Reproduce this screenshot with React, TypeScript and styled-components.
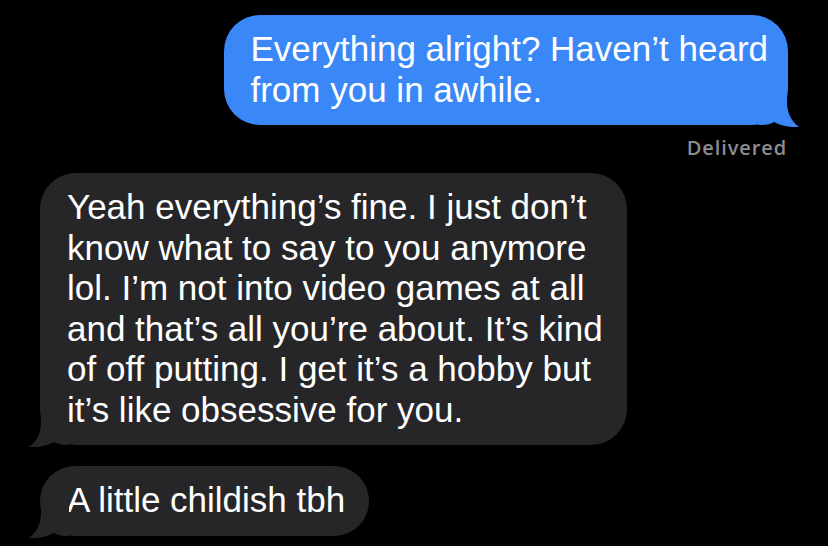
import styled, { createGlobalStyle } from "styled-components";

const GlobalStyle = createGlobalStyle`
    html, body {
        margin: 0;
        padding: 0;
        background: #000;
    }
    body {
        font-family: "Liberation Sans", Arial, sans-serif;
        -webkit-font-smoothing: antialiased;
    }
`;

const Thread = styled.div`
    width: 828px;
    height: 546px;
    box-sizing: border-box;
    padding: 15px 40px 0 40px;
    display: flex;
    flex-direction: column;
    overflow: hidden;
    background: #000;
`;

const Bubble = styled.div<{ $mine?: boolean }>`
    position: relative;
    align-self: ${({ $mine }) => ($mine ? "flex-end" : "flex-start")};
    background: ${({ $mine }) => ($mine ? "#3a87f7" : "#262629")};
    color: #fff;
    border-radius: 36px;
    padding: ${({ $mine }) => ($mine ? "14px 20px 15px 26px" : "14px 24px 15px 27px")};
    font-size: 35px;
    line-height: 40.5px;
    white-space: nowrap;
`;

const Tail = styled.svg<{ $mine?: boolean }>`
    position: absolute;
    bottom: -2px;
    width: 40px;
    height: 40px;
    ${({ $mine }) =>
        $mine ? "right: -11px;" : "left: -11px; transform: scaleX(-1);"}
`;

const Status = styled.div`
    align-self: flex-end;
    margin: 11px 1px 13px 0;
    font-family: "Open Sans", "Liberation Sans", sans-serif;
    font-size: 20px;
    line-height: 24px;
    font-weight: 600;
    letter-spacing: 0.9px;
    color: #8c8c91;
`;

const Gap = styled.div`
    height: 21px;
`;

function BubbleTail({ mine, color }: { mine?: boolean; color: string }) {
    return (
        <Tail $mine={mine} viewBox="0 0 40 40">
            <path
                d="M0 0 H28 V14 C28 26 32 34 40 40 C32 40.5 22 39 15 35 C11 37.5 6 38 0 38 Z"
                fill={color}
            />
        </Tail>
    );
}

function Message({ mine, lines }: { mine?: boolean; lines: string[] }) {
    return (
        <Bubble $mine={mine}>
            {lines.map((l, i) => (
                <div key={i}>{l}</div>
            ))}
            <BubbleTail mine={mine} color={mine ? "#3a87f7" : "#262629"} />
        </Bubble>
    );
}

export default function App() {
    return (
        <>
            <GlobalStyle />
            <Thread>
                <Message
                    mine
                    lines={["Everything alright? Haven’t heard", "from you in awhile."]}
                />
                <Status>Delivered</Status>
                <Message
                    lines={[
                        "Yeah everything’s fine. I just don’t",
                        "know what to say to you anymore",
                        "lol. I’m not into video games at all",
                        "and that’s all you’re about. It’s kind",
                        "of off putting. I get it’s a hobby but",
                        "it’s like obsessive for you.",
                    ]}
                />
                <Gap />
                <Message lines={["A little childish tbh"]} />
            </Thread>
        </>
    );
}
